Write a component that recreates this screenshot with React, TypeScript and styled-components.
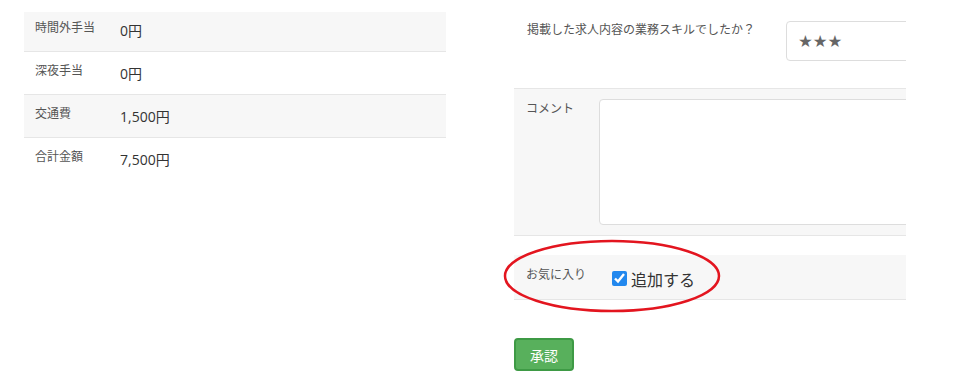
import React, { useState } from "react";
import styled, { createGlobalStyle } from "styled-components";

const GlobalStyle = createGlobalStyle`
    body {
        margin: 0;
        background: #fff;
        font-family: "Open Sans", "Noto Sans CJK JP", sans-serif;
        color: #333;
    }
`;

const Page = styled.div`
    position: relative;
    display: flex;
    gap: 68px;
    padding: 12px 0 0 24px;
    width: 972px;
    height: 386px;
    box-sizing: border-box;
`;

const LeftColumn = styled.div`
    width: 422px;
    flex-shrink: 0;
`;

const RightColumn = styled.div`
    width: 392px;
    flex-shrink: 0;
    overflow: hidden;
`;

const PayRow = styled.div<{ $shaded?: boolean }>`
    display: flex;
    align-items: flex-start;
    height: 43px;
    box-sizing: border-box;
    padding: 13px 0 0 11px;
    background: ${(p) => (p.$shaded ? "#f7f7f7" : "#fff")};
    border-bottom: 1px solid #e6e6e6;

    &:first-child {
        height: 40px;
        padding-top: 10px;
    }
    &:last-child {
        border-bottom: none;
    }
`;

const PayLabel = styled.div`
    width: 85px;
    font-size: 12px;
    line-height: 12px;
    color: #555;
`;

const PayValue = styled.div`
    font-size: 14px;
    line-height: 18px;
    color: #333;
`;

const FormRow = styled.div<{ $shaded?: boolean }>`
    display: flex;
    align-items: flex-start;
    width: 600px;
    padding-left: 12px;
    box-sizing: border-box;
    background: ${(p) => (p.$shaded ? "#f7f7f7" : "transparent")};
    border-bottom: 1px solid #e6e6e6;
`;

const QuestionRow = styled(FormRow)`
    padding-top: 9px;
    padding-bottom: 27px;
    padding-left: 13px;
`;

const CommentRow = styled(FormRow)`
    padding-top: 10px;
    padding-bottom: 10px;
`;

const FavoriteRow = styled(FormRow)`
    align-items: center;
    height: 45px;
    margin-top: 19px;
`;

const FormLabel = styled.div<{ $width: number; $offset?: number }>`
    width: ${(p) => p.$width}px;
    flex-shrink: 0;
    margin-top: ${(p) => p.$offset ?? 0}px;
    font-size: 12px;
    line-height: 12px;
    color: #555;
`;

const StarBox = styled.div`
    width: 220px;
    height: 40px;
    box-sizing: border-box;
    display: flex;
    align-items: center;
    padding-left: 11px;
    border: 1px solid #ddd;
    border-radius: 4px;
    background: #fff;
    font-family: "DejaVu Sans", sans-serif;
    font-size: 16.5px;
    color: #666;
`;

const CommentArea = styled.textarea`
    width: 400px;
    height: 126px;
    box-sizing: border-box;
    border: 1px solid #ddd;
    border-radius: 4px;
    background: #fff;
    resize: none;
    outline: none;
`;

const CheckLabel = styled.label`
    display: flex;
    align-items: center;
    gap: 4px;
    margin-top: 3px;
    font-size: 16px;
    color: #333;
    cursor: pointer;
`;

const CheckInput = styled.input`
    width: 15px;
    height: 15px;
    margin: 0;
    accent-color: #2288ee;
`;

const ApproveButton = styled.button`
    margin-top: 38px;
    width: 60px;
    height: 33px;
    border: 2px solid #3e9a45;
    border-radius: 4px;
    background: #58b05c;
    color: #fff;
    font-family: "Noto Sans CJK JP", sans-serif;
    font-size: 14px;
    cursor: pointer;
`;

const Annotation = styled.svg`
    position: absolute;
    left: 503px;
    top: 238px;
    pointer-events: none;
`;

const payments = [
    { label: "時間外手当", value: "0円" },
    { label: "深夜手当", value: "0円" },
    { label: "交通費", value: "1,500円" },
    { label: "合計金額", value: "7,500円" },
];

const App: React.FC = () => {
    const [favorite, setFavorite] = useState(true);

    return (
        <Page>
            <GlobalStyle />
            <LeftColumn>
                {payments.map((p, i) => (
                    <PayRow key={p.label} $shaded={i % 2 === 0}>
                        <PayLabel>{p.label}</PayLabel>
                        <PayValue>{p.value}</PayValue>
                    </PayRow>
                ))}
            </LeftColumn>
            <RightColumn>
                <QuestionRow>
                    <FormLabel $width={259} $offset={3}>掲載した求人内容の業務スキルでしたか？</FormLabel>
                    <StarBox>★★★</StarBox>
                </QuestionRow>
                <CommentRow $shaded>
                    <FormLabel $width={73} $offset={4}>コメント</FormLabel>
                    <CommentArea />
                </CommentRow>
                <FavoriteRow $shaded>
                    <FormLabel $width={86} $offset={-4}>お気に入り</FormLabel>
                    <CheckLabel>
                        <CheckInput
                            type="checkbox"
                            checked={favorite}
                            onChange={(e) => setFavorite(e.target.checked)}
                        />
                        追加する
                    </CheckLabel>
                </FavoriteRow>
                <ApproveButton>承認</ApproveButton>
            </RightColumn>
            <Annotation width="220" height="78" viewBox="0 0 220 78">
                <ellipse cx="109" cy="38" rx="107" ry="35" fill="none" stroke="#e3151f" strokeWidth="2.5" />
            </Annotation>
        </Page>
    );
};

export default App;
